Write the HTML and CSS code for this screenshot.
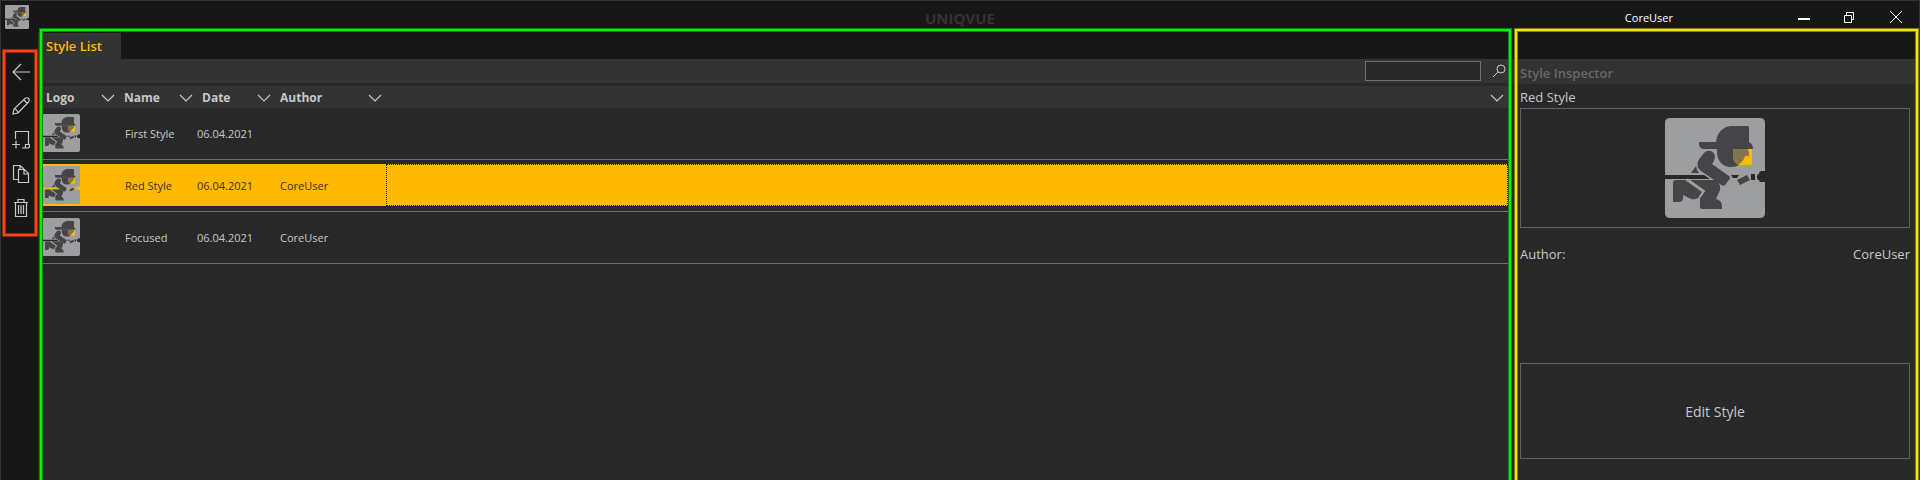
FILE: index.html
```html
<!DOCTYPE html>
<html lang="en">
<head>
<meta charset="utf-8">
<title>UNIQVUE</title>
<link rel="stylesheet" href="styles.css">
</head>
<body>
<svg class="defs" aria-hidden="true">
  <symbol id="logo" viewBox="0 0 100 100">
    <path fill="#9c9ea0" d="M5 0H95Q100 0 100 5V53H97Q94 53 94 56Q92 56 92 59Q92 62 94 62Q94 64 97 64H100V95Q100 100 95 100H5Q0 100 0 95V61H45L39 57H0V5Q0 0 5 0Z"/>
    <g class="hole">
      <path d="M66 57H74L72 60H68Z"/>
      <path d="M86 56H90V62H86Z"/>
    </g>
    <g fill="#454547">
      <path d="M34 24H51C52 14 59 8 67 8H82Q84 8 84 10V24Q88 26 88 31H38Q34 30 34 26Z"/>
      <path d="M52 31H84V38H80C78 46 72 49 66 49C58 49 52 43 52 34Z"/>
      <path d="M33 50C32 45 33 43 35 40L39 35C43 31 49 33 50 38C50 41 49 43 47 46L64 58Q66 60 64 62L60 67Q58 69 55 66L36 53Z"/>
      <path d="M31 48L26 55H34L32 52Z"/>
      <path d="M25 62H50C54 64 56 68 55 72L51 81Q57 82 57 89V91H37Q35 91 35 89V80L39 73Z"/>
      <path d="M8 65Q8 62 11 62H20L37 74L33 80Q30 82 26 81L18 77Q19 84 14 84H8Z"/>
      <path d="M72 62L82 57L85 62L75 67Z"/>
    </g>
    <path d="M22 61L39 73L35 79" fill="none" stroke="#9c9ea0" stroke-width="2"/>
    <path d="M68 31H84V38H80C79 42 76 45 73 47Q68 44 68 41Z" fill="#86734f"/>
    <path d="M83 31H87V47H73C76 45 79 42 80 38H84V33H83Z" fill="#ffb900"/>
  </symbol>
  <symbol id="chevron" viewBox="0 0 14 8"><path d="M1 1L7 7L13 1"/></symbol>
</svg>

<div class="window">
  <header class="titlebar">
    <svg class="app-logo"><use href="#logo"/></svg>
    <h1 class="brand">UNIQVUE</h1>
    <div class="account">
      <span class="user">CoreUser</span>
      <button class="win-btn" aria-label="Minimize"><svg width="12" height="12" viewBox="0 0 12 12"><path d="M0 8H12" stroke-width="2"/></svg></button>
      <button class="win-btn" aria-label="Restore"><svg width="12" height="12" viewBox="0 0 12 12"><path d="M.500 4.500H7.500V11.500H.500ZM2.500 4V1.500H9.500V8.500H8"/></svg></button>
      <button class="win-btn" aria-label="Close"><svg width="12" height="12" viewBox="0 0 12 12"><path d="M0 0L12 12M12 0L0 12"/></svg></button>
    </div>
  </header>

  <div class="workspace">
    <nav class="sidebar" aria-label="Style actions">
      <button class="tool" aria-label="Back"><svg viewBox="0 0 18 18"><path d="M18 9H1M9 1L1 9L9 17"/></svg></button>
      <button class="tool" aria-label="Edit"><svg viewBox="0 0 18 18"><path d="M1 17L2 12L13 1.500Q15 0 16.500 1.500Q18 3 16.500 5L6 16ZM12 3L15 6M2 12Q5 12 6 16"/></svg></button>
      <button class="tool" aria-label="Add"><svg viewBox="0 0 18 18"><path d="M3.500 8V.500H16.500V13M0 13.500H8M4 9.500V17.500M10 17H15.500Q17.500 17 17.500 15V13.500H13.500V15.500Q13.500 17 12 17"/></svg></button>
      <button class="tool" aria-label="Copy"><svg viewBox="0 0 18 18"><path d="M6 14.500H1.500V.500H8L12 4M6.500 4.500H12.500L16.500 8.500V17.500H6.500ZM12 4.500V9H16.500M8 .500V4"/></svg></button>
      <button class="tool" aria-label="Delete"><svg viewBox="0 0 18 18"><path d="M2 3.500H16M6 3V.500H12V3M3.500 4V17.500H14.500V4M6.500 6V15M9 6V15M11.500 6V15"/></svg></button>
    </nav>

    <main class="list-panel">
      <div class="tabs"><button class="tab">Style List</button></div>
      <div class="searchbar">
        <input class="search" type="text" aria-label="Search styles">
        <button class="search-btn" aria-label="Search"><svg width="14" height="14" viewBox="0 0 14 14"><circle cx="9" cy="5" r="4"/><path d="M6 8L1 13"/></svg></button>
      </div>
      <div class="table-wrap">
        <table class="styles">
          <colgroup><col class="c-std"><col class="c-std"><col class="c-std"><col class="c-author"><col></colgroup>
          <thead>
            <tr>
              <th><div class="head">Logo<button class="sort" aria-label="Filter logo"><svg><use href="#chevron"/></svg></button></div></th>
              <th><div class="head">Name<button class="sort" aria-label="Filter name"><svg><use href="#chevron"/></svg></button></div></th>
              <th><div class="head">Date<button class="sort" aria-label="Filter date"><svg><use href="#chevron"/></svg></button></div></th>
              <th><div class="head">Author<button class="sort" aria-label="Filter author"><svg><use href="#chevron"/></svg></button></div></th>
              <th><div class="head"><button class="sort" aria-label="Choose columns"><svg><use href="#chevron"/></svg></button></div></th>
            </tr>
          </thead>
          <tbody>
            <tr>
              <td><div class="cell thumb"><svg><use href="#logo"/></svg></div></td>
              <td><div class="cell name">First Style</div></td>
              <td><div class="cell">06.04.2021</div></td>
              <td><div class="cell author"></div></td>
              <td><div class="cell"></div></td>
            </tr>
            <tr class="selected">
              <td><div class="cell thumb"><svg><use href="#logo"/></svg></div></td>
              <td><div class="cell name">Red Style</div></td>
              <td><div class="cell">06.04.2021</div></td>
              <td><div class="cell author">CoreUser</div></td>
              <td><div class="cell focus"></div></td>
            </tr>
            <tr>
              <td><div class="cell thumb"><svg><use href="#logo"/></svg></div></td>
              <td><div class="cell name">Focused</div></td>
              <td><div class="cell">06.04.2021</div></td>
              <td><div class="cell author">CoreUser</div></td>
              <td><div class="cell"></div></td>
            </tr>
          </tbody>
        </table>
      </div>
    </main>

    <aside class="inspector">
      <h2 class="inspector-title">Style Inspector</h2>
      <div class="inspector-body">
        <div class="style-name">Red Style</div>
        <div class="preview"><svg><use href="#logo"/></svg></div>
        <div class="meta"><span>Author:</span><span>CoreUser</span></div>
        <button class="edit">Edit Style</button>
      </div>
    </aside>
  </div>
</div>
</body>
</html>
```
FILE: styles.css
```css
* { box-sizing: border-box; }

body {
  margin: 0;
  background: #171717;
  color: #c8c8c8;
  font: 11px/16px "Open Sans", "Noto Sans", sans-serif;
}

button {
  margin: 0;
  padding: 0;
  border: 0;
  background: none;
  color: inherit;
  font: inherit;
}

svg {
  display: block;
  fill: none;
  stroke: currentColor;
}

.defs { position: absolute; width: 0; height: 0; }
#logo { stroke: none; }
.hole { fill: var(--hole, #282828); }

.window {
  display: flex;
  flex-direction: column;
  height: 100vh;
  overflow: hidden;
  border: 1px solid #333;
  border-bottom: 0;
}

/* Title bar */
.titlebar {
  display: grid;
  grid-template-columns: 1fr auto 1fr;
  flex: none;
  height: 32px;
}
.app-logo { width: 24px; height: 24px; margin: 4px; --hole: #171717; }
.brand {
  margin: 0;
  color: #333;
  font-size: 15px;
  font-weight: 700;
  line-height: 34px;
}
.account { display: flex; justify-content: flex-end; height: 32px; color: #fff; }
.user { margin-right: 108px; line-height: 34px; }
.win-btn { display: grid; place-items: center; width: 46px; height: 32px; }

/* Workspace columns */
.workspace {
  display: grid;
  grid-template-columns: 37px minmax(0, 1fr) 405px;
  flex: 1;
  min-height: 0;
}
.sidebar, .list-panel, .inspector { position: relative; }

/* Coloured frames drawn over the three areas */
.sidebar::after, .list-panel::after, .inspector::after {
  content: "";
  position: absolute;
  pointer-events: none;
  border: 2px solid var(--frame);
  box-shadow: 0 0 0 1px var(--edge), inset 0 0 0 1px var(--edge);
}
.sidebar::after { --frame: #ff4019; --edge: #8c2a14; inset: 17px 1px auto 2px; height: 184px; }
.list-panel::after { --frame: #00f500; --edge: #0c850c; inset: -4px 3px -8px 2px; }
.inspector::after { --frame: #f0e600; --edge: #817c0c; inset: -4px 1px -8px 1px; }

.sidebar { padding-top: 22px; }
.sidebar::after { height: 182px; }
.tool { display: grid; place-items: center; width: 100%; height: 34px; padding-left: 3px; }
.tool svg { width: 18px; height: 18px; stroke-width: 1.2; }

/* Style list */
.list-panel { background: #282828; }
.tabs { height: 26px; background: #171717; }
.tab {
  height: 26px;
  padding: 0 19px 0 8px;
  background: #333;
  color: #ffb900;
  font-size: 13px;
  font-weight: 600;
}
.searchbar {
  display: flex;
  align-items: center;
  justify-content: flex-end;
  gap: 11px;
  height: 24px;
  padding-right: 8px;
  background: #333;
}
.search {
  width: 116px;
  height: 20px;
  padding: 0 4px;
  border: 1px solid #707070;
  background: #282828;
  color: inherit;
  font: inherit;
}
.table-wrap { padding: 3px 6px 0 3px; }
.styles { width: 100%; table-layout: fixed; border-collapse: separate; border-spacing: 0; }
.c-std { width: 78px; }
.c-author { width: 111px; }
.styles th { padding: 0; background: #333; text-align: left; font-size: 12px; font-weight: 700; }
.head { display: flex; align-items: center; height: 22px; padding: 1px 4px 0 5px; }
.sort { margin-left: auto; }
.sort svg { width: 14px; height: 8px; stroke-width: 1.2; }
.styles td { padding: 4px 0 5px; border-bottom: 1px solid #707070; }
.cell { display: flex; align-items: center; height: 42px; padding-top: 2px; }
.thumb { padding: 0 0 0 1px; }
.thumb svg { width: 38px; height: 38px; }
.name { padding-left: 6px; }
.author { padding-left: 5px; }
.selected { color: #3a3010; --hole: #ffb900; }
.selected .cell { background: #ffb900; }
.selected .focus { border: 1px dotted #171717; }

/* Inspector */
.inspector {
  display: flex;
  flex-direction: column;
  padding-top: 26px;
  font-size: 13px;
}
.inspector-title {
  flex: none;
  height: 25px;
  margin: 0;
  padding-left: 6px;
  background: #333;
  color: #686868;
  font-size: 13px;
  font-weight: 600;
  line-height: 28px;
}
.inspector-body { flex: 1; padding: 0 9px 0 6px; background: #282828; }
.style-name { height: 24px; line-height: 26px; }
.preview {
  display: grid;
  place-items: center;
  height: 120px;
  border: 1px solid #606060;
}
.preview svg { width: 100px; height: 100px; }
.meta { display: flex; justify-content: space-between; margin: 16px 0 99px; line-height: 20px; }
.edit { width: 100%; height: 96px; padding-top: 2px; border: 1px solid #606060; font-size: 14px; }
```
